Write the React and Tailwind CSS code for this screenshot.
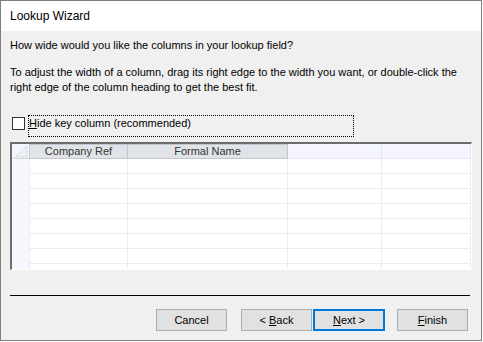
import React from "react";

const font = { fontFamily: '"Liberation Sans", Arial, sans-serif' };

function Btn({ children, focus, w }) {
  return (
    <div
      className={`${w} h-[22px] flex items-center justify-center text-[11px] text-black bg-[#e1e1e1] ${
        focus ? "border-2 border-[#0078d7]" : "border border-[#adadad]"
      }`}
    >
      <span className="whitespace-pre">{children}</span>
    </div>
  );
}

function DataRow({ h = "h-[15px]", last }) {
  return (
    <div className={`flex ${h}`}>
      <div className="w-[17px] bg-[#f7f7ff]" />
      <div className={`w-[99px] border-l border-r border-[#ececec] ${last ? "" : "border-b"} bg-white`} />
      <div className={`w-[160px] border-r border-[#ececec] ${last ? "" : "border-b"} bg-white`} />
      <div className={`w-[94px] border-r border-[#ececec] ${last ? "" : "border-b"} bg-white`} />
      <div className={`w-[89px] border-r border-[#ececec] ${last ? "" : "border-b"} bg-white`} />
    </div>
  );
}

export default function App() {
  return (
    <div className="w-[483px] h-[342px] bg-white overflow-hidden" style={font}>
      <div className="w-[482px] h-[341px] border border-[#7f7f7f] flex flex-col bg-[#f0f0f0]">
        <div className="h-[30px] bg-white flex items-center pl-[9px] text-[12px] text-black">
          Lookup Wizard
        </div>
        <div className="flex flex-col pl-[9px] text-[11px] leading-[15px] text-black">
          <div className="mt-[7px]">How wide would you like the columns in your lookup field?</div>
          <div className="mt-[12px] w-[462px]">
            To adjust the width of a column, drag its right edge to the width you want, or double-click the
            right edge of the column heading to get the best fit.
          </div>
          <div className="mt-[20px] h-[22px] flex items-start">
            <div className="mt-[2px] ml-[2px] w-[13px] h-[13px] border border-[#333] bg-white" />
            <div className="ml-[3px] w-[326px] h-[22px] border border-dotted border-black pt-[0px]">
              <span>
                <span className="underline">H</span>ide key column (recommended)
              </span>
            </div>
          </div>
          <div className="mt-[5px] w-[462px] h-[128px] border-t-2 border-l-2 border-[#6d6d6d] border-r border-b border-r-white border-b-white flex flex-col">
            <div className="flex h-[15px]">
              <div className="w-[17px] bg-[#f5f6fd] relative border-b border-[#d6d9e0]">
                <svg className="absolute left-0 top-0" width="17" height="14" viewBox="0 0 17 14">
                  <path d="M3 13 L15 2 L15 13 Z" fill="#eef0f4" stroke="#d6d9df" strokeWidth="1" />
                </svg>
              </div>
              <div className="w-[99px] bg-[#e0e3e8] border border-[#c3c7cd] flex items-center justify-center text-[11px] text-[#333]">
                Company Ref
              </div>
              <div className="w-[160px] bg-[#e0e3e8] border-t border-b border-r border-[#c3c7cd] flex items-center justify-center text-[11px] text-[#333]">
                Formal Name
              </div>
              <div className="w-[94px] bg-[#f5f6fd] border-r border-b border-[#e4e6ee]" />
              <div className="w-[89px] bg-[#f5f6fd] border-r border-b border-[#e4e6ee]" />
            </div>
            <DataRow />
            <DataRow />
            <DataRow />
            <DataRow />
            <DataRow />
            <DataRow />
            <DataRow />
            <DataRow h="h-[5px]" last />
          </div>
          <div className="mt-[25px] w-[460px] h-[1px] bg-black" />
          <div className="mt-[13px] flex">
            <div className="ml-[146px]">
              <Btn w="w-[71px]">Cancel</Btn>
            </div>
            <div className="ml-[14px]">
              <Btn w="w-[71px]">
                {"< "}
                <span className="underline">B</span>ack
              </Btn>
            </div>
            <div className="ml-[1px]">
              <Btn w="w-[72px]" focus>
                <span className="underline">N</span>
                {"ext >"}
              </Btn>
            </div>
            <div className="ml-[12px]">
              <Btn w="w-[71px]">
                <span className="underline">F</span>inish
              </Btn>
            </div>
          </div>
        </div>
      </div>
    </div>
  );
}
